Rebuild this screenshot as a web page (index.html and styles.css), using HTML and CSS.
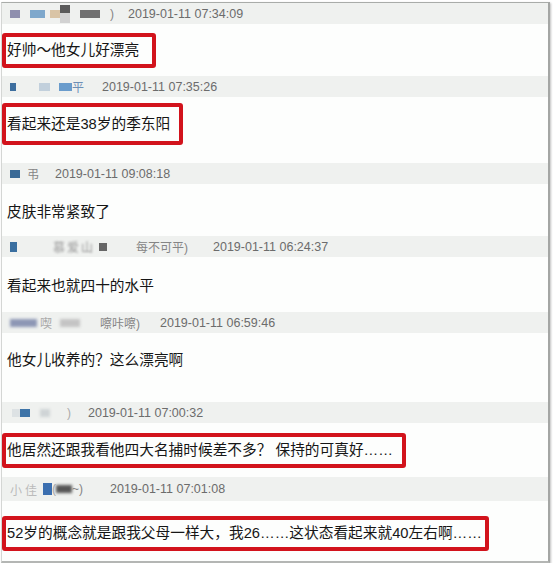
FILE: index.html
```html
<!DOCTYPE html>
<html lang="zh-CN">
<head>
    <meta charset="UTF-8">
    <meta name="viewport" content="width=device-width, initial-scale=1.0">
    <title>评论</title>
    <link rel="stylesheet" href="styles.css">
</head>
<body>
    <div class="panel">
        <div class="comment">
            <div class="meta">
                <span class="nick n1">
                    <i class="blk" style="width:10px;background:#8f8fae;margin-right:10px"></i>
                    <i class="blk" style="width:15px;background:#7ea8cc;margin-right:5px"></i>
                    <i class="blk" style="width:10px;background:#d9c4a6"></i>
                    <i class="blk tall" style="width:10px;margin-right:10px"></i>
                    <i class="blk" style="width:20px;background:#707070;margin-right:10px"></i>
                    <b class="nm">)</b>
                </span>
                <span class="time">2019-01-11 07:34:09</span>
            </div>
            <div class="content c1">
                <p class="note w1">好帅～他女儿好漂亮</p>
            </div>
        </div>

        <div class="comment">
            <div class="meta">
                <span class="nick n2">
                    <i class="blk" style="width:6px;background:#3d6e9e;margin-right:23px"></i>
                    <i class="blk" style="width:11px;background:#c2d0dc;margin-right:9px"></i>
                    <i class="blk" style="width:13px;background:#6a9ccc"></i>
                    <b class="nm blue">平</b>
                </span>
                <span class="time">2019-01-11 07:35:26</span>
            </div>
            <div class="content c2">
                <p class="note w2 tall-note">看起来还是38岁的季东阳</p>
            </div>
        </div>

        <div class="comment">
            <div class="meta">
                <span class="nick n3">
                    <i class="blk" style="width:10px;background:#3a6a96;margin-right:7px"></i>
                    <b class="nm">弔</b>
                </span>
                <span class="time">2019-01-11 09:08:18</span>
            </div>
            <div class="content c3">
                <p class="plain">皮肤非常紧致了</p>
            </div>
        </div>

        <div class="comment">
            <div class="meta m4">
                <span class="nick n4">
                    <i class="blk" style="width:7px;height:10px;background:#3a6fa0;margin-right:36px"></i>
                    <b class="nm fuzzy">慕爱山</b>
                    <i class="blk" style="width:8px;background:#666;margin-left:4px;margin-right:29px"></i>
                    <b class="nm">每不可平)</b>
                </span>
                <span class="time">2019-01-11 06:24:37</span>
            </div>
            <div class="content c4">
                <p class="plain">看起来也就四十的水平</p>
            </div>
        </div>

        <div class="comment">
            <div class="meta">
                <span class="nick n5">
                    <i class="blk fz" style="width:27px;background:#8d97b5;margin-right:3px"></i>
                    <b class="nm light">喫</b>
                    <i class="blk fz" style="width:20px;background:#c4c4c4;margin-left:8px;margin-right:20px"></i>
                    <b class="nm">嚓咔嚓)</b>
                </span>
                <span class="time">2019-01-11 06:59:46</span>
            </div>
            <div class="content c5">
                <p class="plain">他女儿收养的？这么漂亮啊</p>
            </div>
        </div>

        <div class="comment">
            <div class="meta">
                <span class="nick n6">
                    <i class="blk" style="width:8px;background:#dde2e4;margin-left:2px"></i>
                    <i class="blk" style="width:10px;background:#3e74a8;margin-right:10px"></i>
                    <i class="blk fz" style="width:10px;background:#cfd4d6;margin-right:17px"></i>
                    <b class="nm light">)</b>
                </span>
                <span class="time">2019-01-11 07:00:32</span>
            </div>
            <div class="content c6">
                <p class="note w6">他居然还跟我看他四大名捕时候差不多？ 保持的可真好……</p>
            </div>
        </div>

        <div class="comment">
            <div class="meta m7">
                <span class="nick n7">
                    <b class="nm faint">小佳</b>
                    <i class="blk" style="width:9px;height:12px;background:#3b6fb0;margin-left:3px"></i>
                    <b class="nm light">(</b>
                    <i class="blk fz" style="width:16px;background:#555"></i>
                    <b class="nm">~)</b>
                </span>
                <span class="time">2019-01-11 07:01:08</span>
            </div>
            <div class="content c7">
                <p class="note w7">52岁的概念就是跟我父母一样大，我26……这状态看起来就40左右啊……</p>
            </div>
        </div>
    </div>
</body>
</html>
```

FILE: styles.css
```css
body {
    margin: 0;
    padding: 2px 0 0 0;
    background: #fff;
    font-family: "Liberation Sans", "Noto Sans CJK SC", sans-serif;
    color: #161616;
}
.panel {
    width: 546px;
    margin-left: 1px;
    background: #fdfefd;
    border-top: 1px solid #a9aca9;
    border-left: 1px solid #d4d6d4;
    border-right: 2px solid #a4a6a4;
    border-bottom: 2px solid #b4b6b4;
    box-shadow: 1px 1px 2px rgba(0, 0, 0, 0.25);
}
.meta {
    display: flex;
    align-items: center;
    height: 21px;
    padding-left: 8px;
    background: #eff1ef;
}
.m4 {
    height: 21px;
}
.m7 {
    height: 24px;
}
.nick {
    display: flex;
    align-items: center;
    flex-shrink: 0;
}
.n1 { width: 118px; }
.n2 { width: 92px; }
.n3 { width: 45px; }
.n4 { width: 203px; }
.n5 { width: 150px; }
.n6 { width: 78px; }
.n7 { width: 100px; }
.blk {
    display: inline-block;
    height: 8px;
    filter: blur(0.6px);
}
.blk.fz {
    filter: blur(1.4px);
}
.blk.tall {
    height: 18px;
    align-self: flex-start;
    background: linear-gradient(#5a5a5a 0, #5a5a5a 45%, #d2d2d2 45%, #d2d2d2 100%);
}
.nm {
    font-weight: normal;
    font-size: 12px;
    color: #858585;
}
.nm.blue {
    color: #6d8fb6;
}
.nm.light {
    color: #aaa;
}
.nm.faint {
    color: #bbb;
    letter-spacing: 3px;
}
.nm.fuzzy {
    color: #9a9a9a;
    filter: blur(1.2px);
    letter-spacing: 2px;
}
.time {
    font-size: 12.5px;
    color: #6c6c6c;
}
.content {
    box-sizing: border-box;
}
.c1 { height: 52px; padding-top: 9px; }
.c2 { height: 66px; padding-top: 6px; }
.c3 { height: 52px; padding-top: 18px; }
.c4 { height: 55px; padding-top: 19px; }
.c5 { height: 69px; padding-top: 17px; }
.c6 { height: 54px; padding-top: 10px; }
.c7 { height: 60px; padding-top: 15px; }
.plain {
    margin: 0;
    padding-left: 5px;
    font-size: 14.7px;
    line-height: 20px;
}
.note {
    margin: 0;
    box-sizing: border-box;
    height: 35px;
    padding-left: 1px;
    border: 4px solid #d2131c;
    border-radius: 3px;
    font-size: 14.7px;
    line-height: 27px;
    white-space: nowrap;
}
.tall-note {
    height: 42px;
    line-height: 34px;
}
.w1 { width: 154px; }
.w2 { width: 181px; }
.w6 { width: 404px; }
.w7 { width: 487px; }
```
